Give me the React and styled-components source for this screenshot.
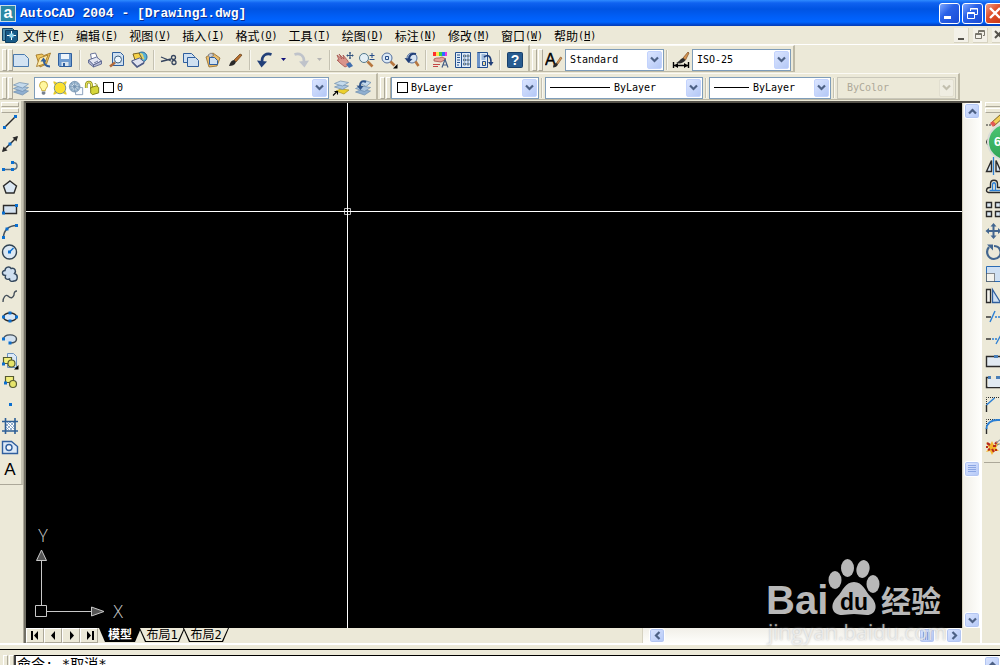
import React from 'react';
import styled, { createGlobalStyle, css } from 'styled-components';

const GlobalStyle = createGlobalStyle`
    * {
        box-sizing: border-box;
    }

    body {
        margin: 0;
        overflow: hidden;
        background-color: #ece9d8;
        font-family: "DejaVu Sans Mono", "Noto Sans CJK SC", monospace;
        font-size: 10px;
        color: #000000;
    }

    button, input, select {
        margin: 0;
        padding: 0;
        border: none;
        background: none;
        font: inherit;
        color: inherit;
    }
`;

const Window = styled.div`
    display: flex;
    flex-direction: column;
    height: 100vh;
    overflow: hidden;
`;

/* title bar */

const TitleBar = styled.header`
    display: flex;
    align-items: center;
    flex: none;
    height: 26px;
    gap: 4px;
    overflow: hidden;
    background: linear-gradient(#2f8bff 0, #0f62f0 3px, #0054e3 9px, #0060fa 18px, #0066ff 22px, #0042c8 25px, #0a3fae 26px);
`;

const Title = styled.h1`
    flex: 1;
    margin: 0;
    font-family: "Liberation Mono", monospace;
    font-size: 13px;
    font-weight: 700;
    color: #ffffff;
    text-shadow: 1px 1px #0a2f92;
`;

const WindowButtons = styled.div`
    display: flex;
    gap: 2px;
    margin-right: -6px;
`;

const WindowButton = styled.button`
    display: flex;
    width: 21px;
    height: 21px;
    border: 1px solid #ffffff;
    border-radius: 3px;
    background: ${(props) => (props.$close
        ? "linear-gradient(135deg, #f0a088, #e0512c 40%, #c53310)"
        : "linear-gradient(135deg, #7fa8ff, #2a62e8 40%, #1b4bd4)")};
`;

/* menu bar */

const MenuBar = styled.nav`
    display: flex;
    align-items: center;
    flex: none;
    height: 19px;
    padding-left: 2px;
    overflow: hidden;
    border-bottom: 1px solid #ffffff;
`;

const MenuList = styled.div`
    display: flex;
    flex: 1;
    gap: 11px;
    padding-left: 5px;
`;

const MenuItem = styled.button`
    display: flex;
    align-items: center;
    height: 18px;
    font-size: 12px;
    white-space: nowrap;
`;

const HotKey = styled.span`
    font-size: 10px;
`;

const DocButtons = styled.div`
    display: flex;
    gap: 4px;
    margin-right: -7px;
`;

const DocButton = styled.button`
    display: flex;
    width: 15px;
    height: 15px;
    background-color: #f3f1e8;
    border-right: 1px solid #d6d2c0;
    border-bottom: 1px solid #d6d2c0;
`;

/* toolbars */

const ToolRow = styled.div`
    display: flex;
    flex: none;
    height: 28px;
`;

const ToolPanel = styled.div`
    display: flex;
    align-items: center;
    height: 27px;
    padding: 2px 2px 0;
    border-top: 1px solid #fbfaf5;
    border-right: 2px solid #bdb9a6;
    border-bottom: 1px solid #bdb9a6;
`;

const gripLine = css`
    content: "";
    flex: none;
    border: 1px solid #ffffff;
    border-right-color: #aca899;
    border-bottom-color: #aca899;
`;

const Grip = styled.div`
    display: flex;
    flex: none;
    gap: 1px;
    width: 8px;
    height: 22px;
    margin-right: ${(props) => (props.$wide ? 3 : 0)}px;

    &::before, &::after {
        ${gripLine}
        width: 3px;
    }
`;

const FlatGrip = styled.div`
    display: flex;
    flex-direction: column;
    flex: none;
    gap: 1px;
    height: 9px;

    &::before, &::after {
        ${gripLine}
        height: 3px;
    }
`;

const ToolButton = styled.button`
    display: flex;
    align-items: center;
    justify-content: center;
    flex: none;
    width: ${(props) => (props.$narrow ? 14 : 22)}px;
    height: 22px;
`;

const Divider = styled.span`
    flex: none;
    width: 2px;
    height: 20px;
    margin: 0 ${(props) => (props.$tight ? 2 : 3)}px;
    border-left: 1px solid #c5c2b2;
    border-right: 1px solid #f8f7f0;
`;

const Combo = styled.label`
    display: flex;
    align-items: center;
    flex: none;
    width: ${(props) => props.$width}px;
    height: 22px;
    padding: 1px;
    border: 1px solid ${(props) => (props.$disabled ? "#c9c7ba" : "#7f9db9")};
    background-color: ${(props) => (props.$disabled ? "#ece9d8" : "#ffffff")};
    color: ${(props) => (props.$disabled ? "#aca899" : "#000000")};
`;

const ComboSelect = styled.select`
    flex: 1;
    min-width: 0;
    height: 18px;
    padding-left: ${(props) => props.$indent || 3}px;
    appearance: none;
    outline: none;
    opacity: 1;
`;

const ComboArrow = styled.span`
    display: flex;
    align-items: center;
    justify-content: center;
    flex: none;
    width: 15px;
    height: 18px;
    border-radius: 2px;
    background: ${(props) => (props.$disabled ? "#efede2" : "linear-gradient(135deg, #dbe5ff, #b4c8f6)")};
    border: 1px solid ${(props) => (props.$disabled ? "#e2dfd0" : "#c3d3fd")};
`;

const LayerGroup = styled.div`
    display: flex;
    padding: 0 1px 0 2px;
`;

const Swatch = styled.span`
    flex: none;
    width: 11px;
    height: 11px;
    margin-left: ${(props) => props.$gap || 0}px;
    border: 1px solid #000000;
    background-color: #ffffff;
`;

const LineSample = styled.span`
    flex: none;
    width: ${(props) => props.$width}px;
    height: 1px;
    margin-left: 3px;
    background-color: #000000;
`;

/* work area */

const WorkArea = styled.main`
    display: flex;
    flex: 1;
    min-height: 0;
`;

const SideBar = styled.aside`
    flex: none;
    width: 24px;
    border-right: 1px solid #aca899;
`;

const SidePanel = styled.div`
    display: flex;
    flex-direction: column;
    width: 23px;
    padding: 1px 2px 4px 1px;
    border-right: 2px solid #c5c2b2;
    border-bottom: 1px solid #aca899;
`;

const RightBar = styled.aside`
    position: relative;
    flex: none;
    width: 20px;
    padding: 1px 0 0 2px;
    border-left: 2px solid #ffffff;
    overflow: hidden;
`;

const RightPanel = styled.div`
    display: flex;
    flex-direction: column;
    width: 26px;
    padding: 0 1px 4px;
    border-bottom: 1px solid #aca899;
`;

const SideButton = styled.button`
    display: flex;
    align-items: center;
    flex: none;
    height: 22px;

    &:nth-of-type(3n) {
        height: 21px;
    }
`;

const Badge = styled.div`
    position: absolute;
    top: 22px;
    left: 5px;
    width: 38px;
    height: 38px;
    padding-left: 5px;
    border: 2px solid #d8dcd8;
    border-radius: 50%;
    background: linear-gradient(#4cc472, #2fa556);
    font-family: "Liberation Sans", sans-serif;
    font-size: 13px;
    font-weight: 700;
    line-height: 34px;
    color: #ffffff;
`;

const Document = styled.section`
    position: relative;
    display: flex;
    flex-direction: column;
    flex: 1;
    min-width: 0;
    border-top: 2px solid #55524a;
    border-left: 2px solid #716f64;
`;

const DrawingRow = styled.div`
    display: flex;
    flex: 1;
    min-height: 0;
`;

const Drawing = styled.div`
    position: relative;
    flex: 1;
    background-color: #000000;
`;

const Crosshair = styled.svg`
    display: block;
    width: 100%;
    height: 100%;
`;

const UcsIcon = styled.svg`
    position: absolute;
    left: 4px;
    bottom: 0;
`;

const ScrollBar = styled.div`
    display: flex;
    flex-direction: ${(props) => (props.$vertical ? "column" : "row")};
    width: ${(props) => (props.$vertical ? "18px" : "320px")};
    flex: none;
    padding: ${(props) => (props.$vertical ? "0 1px" : "0 0 0 6px")};
    border-left: 1px solid #d6d2c0;
    background: ${(props) => (props.$vertical
        ? "linear-gradient(90deg, #f1efe8, #fefefb)"
        : "linear-gradient(#f1efe8, #fefefb)")};
`;

const ScrollButton = styled.button`
    display: flex;
    align-items: center;
    justify-content: center;
    flex: none;
    width: 16px;
    height: ${(props) => (props.$flat ? 15 : 16)}px;
    border: 1px solid #ffffff;
    border-radius: 3px;
    background: linear-gradient(135deg, #dbe5ff, #b4c8f6);
    box-shadow: inset 0 0 0 1px #b3c6f2;
`;

const Track = styled.div`
    flex: ${(props) => props.$size};
`;

const BottomRow = styled.div`
    display: flex;
    flex: none;
    height: 15px;
    padding-right: 18px;
`;

const TabButton = styled.button`
    display: flex;
    align-items: center;
    justify-content: center;
    width: 18px;
    border: 1px solid #ffffff;
    border-right-color: #aca899;
    border-bottom-color: #aca899;
`;

const Tabs = styled.div`
    display: flex;
    flex: 1;
    padding-left: 1px;
`;

const tabShape = css`
    clip-path: polygon(0 0, 100% 0, calc(100% - 6px) 100%, 6px 100%);
`;

const Tab = styled.button`
    position: relative;
    z-index: 0;
    width: ${(props) => (props.$active ? 42 : 46)}px;
    height: 14px;
    margin-right: -2px;
    line-height: 12px;
    font-size: 12px;
    font-weight: ${(props) => (props.$active ? 700 : 400)};
    color: ${(props) => (props.$active ? "#ffffff" : "#000000")};
    background-color: #000000;
    ${tabShape}

    &::before {
        content: "";
        position: absolute;
        z-index: -1;
        inset: 0 1px 1px;
        background-color: ${(props) => (props.$active ? "#000000" : "#ece9d8")};
        ${tabShape}
    }
`;

/* watermark */

const Watermark = styled.div`
    position: absolute;
    right: 34px;
    bottom: 0;
    width: 180px;
    pointer-events: none;
`;

const WatermarkLogo = styled.svg`
    display: block;
`;

const WatermarkUrl = styled.div`
    margin-top: -4px;
    padding-left: 2px;
    font-family: "Open Sans", sans-serif;
    font-size: 21px;
    line-height: 22px;
    white-space: nowrap;
    color: rgba(255, 255, 255, 0.6);
    text-shadow: 0 0 2px rgba(140, 140, 140, 0.6);
`;

/* command line */

const CommandPane = styled.footer`
    display: flex;
    flex: none;
    height: 22px;
    flex-direction: column;
    overflow: hidden;
    border-top: 2px solid #ffffff;
`;

const Splitter = styled.div`
    flex: none;
    height: 10px;
    padding-top: 4px;

    &::before {
        content: "";
        display: block;
        height: 1px;
        background-color: #000000;
    }
`;

const CommandRow = styled.div`
    display: flex;
    flex: none;
    padding-left: 3px;
`;

const CommandBox = styled.div`
    display: flex;
    flex: 1;
    height: 40px;
    margin-left: 3px;
    border-top: 1px solid #000000;
    border-left: 2px solid #404040;
    background-color: #ffffff;
`;

const CommandInput = styled.input`
    flex: 1;
    height: 17px;
    padding-left: 1px;
    outline: none;
    font-size: 14px;
    line-height: 17px;
`;

const BLUE = "#2f5f9e";
const DOT = "#0a6fd0";
const INK = "#2b2b2b";
const PALE = "#cfe0f0";

const Dot = ({ x, y }) => <rect x={x - 1.5} y={y - 1.5} width="3" height="3" fill={DOT} />;

const sheet = (x, y, w, h) => (
    <path d={`M${x} ${y}h${w - 3}l3 3v${h - 3}h${-w}z`} fill={PALE} stroke={BLUE} />
);

const icons = {
    newFile: <path d="M1.500 3.500h11l4 4v8h-15z" fill="#d3e3f2" stroke="#4a7aae" />,
    open: (
        <g>
            <path d="M2 4l6-1 2 1.500 6.500-2.500-4 11-6.500 3z" fill="#f0c860" stroke="#9a6d1c" strokeWidth=".8" />
            <path d="M2.500 15.500l3-8.500 8.500-3-3.500 9z" fill="#ffeaa8" stroke="#9a6d1c" strokeWidth=".8" />
            <path d="M16 15.500c-4 0-6.500-2.500-6-6" fill="none" stroke={BLUE} strokeWidth="2" />
            <path d="M6.500 10.500l3-4 3 4z" fill={BLUE} />
        </g>
    ),
    save: (
        <g>
            <path d="M2.500 2.500h13v13h-12l-1-1z" fill="#6f9cd0" stroke={BLUE} />
            <path d="M5 3h8v5H5z" fill="#eef5fb" />
            <path d="M5.500 11h7v4h-7z" fill="#d8e4ef" />
            <path d="M7 12h2v3H7z" fill={BLUE} />
        </g>
    ),
    print: (
        <g stroke="#5b6791" strokeLinejoin="round" strokeWidth=".9">
            <path d="M5.500 8l-1-5 5-1 2 5z" fill="#ffffff" />
            <path d="M2.500 9l8-3 5 4-8 4z" fill="#e3e6f2" />
            <path d="M2.500 9v3l5 4v-2zM7.500 14l8-4v3l-8 3z" fill="#b6bbd4" />
            <path d="M8 12l4-2" />
        </g>
    ),
    preview: (
        <g>
            {sheet(4.5, 1.5, 11, 13)}
            <circle cx="10" cy="8.500" r="3.500" fill="#eef6fd" stroke="#40607f" />
            <path d="M7 11.500l-5 4" stroke="#b06a3c" strokeWidth="2.500" />
        </g>
    ),
    publish: (
        <g>
            <circle cx="12" cy="6" r="5" fill="#57b4d8" stroke="#2c6b9a" />
            <path d="M10 3c4 0 1 3 4 5" stroke="#e6d36a" strokeWidth="2" fill="none" />
            <path d="M3 3l6-1 3 6-7 1z" fill="#f6d34a" stroke="#7d6320" />
            <path d="M1.500 10l8-3 5 4-7 5z" fill="#dfe2ef" stroke="#4f5c86" />
            <path d="M2 11l5 5 7-4" fill="none" stroke="#4f5c86" strokeWidth="1.500" />
        </g>
    ),
    cut: (
        <g fill="none" stroke="#36455e" strokeWidth="1.300">
            <path d="M1 6l10 4M1 10.500l10-2.500" />
            <circle cx="13.500" cy="6.500" r="2" />
            <circle cx="14" cy="11.500" r="2" />
        </g>
    ),
    copy: <g>{sheet(1.5, 2.5, 11, 9)}{sheet(5.5, 6.5, 11, 9)}</g>,
    paste: (
        <g>
            <path d="M2 6l7-4 7 5-3 8-8 1z" fill="#e9bb6a" stroke="#8f6a2c" strokeWidth=".8" />
            <path d="M4 4l3-2 3 2-4 3z" fill="#c9ccd2" stroke="#777777" strokeWidth=".8" />
            <path d="M5.500 6.500h5l3 3v4h-8z" fill={PALE} stroke={BLUE} />
        </g>
    ),
    brush: (
        <g>
            <path d="M8 9l6-6 2 1-6 7z" fill="#b86f2c" stroke="#5f3a16" strokeWidth=".7" />
            <path d="M3 15c1-4 3-6 5-6l2 2c-1 3-4 4-7 4z" fill="#2a2a2a" />
        </g>
    ),
    undo: (
        <g>
            <path d="M15.500 3.500c-5-2-10 1-9.500 7" fill="none" stroke="#213f78" strokeWidth="2.600" />
            <path d="M1 9.500l10 1-5.500 6z" fill="#213f78" />
        </g>
    ),
    redo: (
        <g>
            <path d="M2.500 3.500c5-2 10 1 9.500 7" fill="none" stroke="#bfc3ca" strokeWidth="2.600" />
            <path d="M17 9.500l-10 1 5.500 6z" fill="#bfc3ca" />
        </g>
    ),
    pan: (
        <g>
            <path d="M1 4l5 4-3-5 5 5-1-4 5 6 1 4-4 2-5-4-3-3 2 0z" fill="#d9948b" stroke="#a5524c" strokeWidth=".8" />
            <path d="M10 13l4-2 3 4-4 2z" fill="#426fae" />
            <path d="M14 1v7M10.500 4.500h7M13 2h2M13 7h2M11.500 3.500v2M16.500 3.500v2" stroke="#34557f" />
        </g>
    ),
    zoomRealtime: (
        <g>
            <circle cx="6" cy="7" r="4.500" fill="#e4eff5" stroke="#53798d" />
            <path d="M9.500 10.500l5 5" stroke="#b77740" strokeWidth="2.600" />
            <path d="M14 2v5M11.500 4.500h5M11.500 8.500h5" stroke="#284e8a" />
        </g>
    ),
    zoomWindow: (
        <g>
            <circle cx="7" cy="7" r="5" fill="#dce9f5" stroke="#536f9d" />
            <path d="M5.500 5.500h3v3h-3z" fill="none" stroke="#284e8a" />
            <path d="M10.500 10.500l4 4" stroke="#b77740" strokeWidth="2.600" />
            <path d="M17.500 13v4.500H13z" fill="#000000" />
        </g>
    ),
    zoomPrevious: (
        <g>
            <circle cx="10" cy="7" r="5" fill="#d7e4f2" stroke="#536f9d" />
            <path d="M13.500 10.500l3 4.500" stroke="#b77740" strokeWidth="2.600" />
            <path d="M14 3c-4-1-7 1-7 5" fill="none" stroke="#213f78" strokeWidth="2.200" />
            <path d="M2.500 7l8 1-4 4z" fill="#213f78" />
        </g>
    ),
    properties: (
        <g>
            <path d="M1 1h3v4H1z" fill="#ff2d2d" />
            <path d="M4 1h3v4H4z" fill="#ffe14a" />
            <path d="M7 1h3v4H7z" fill="#37d24b" />
            <path d="M10 1h3v4h-3z" fill="#2d6cff" />
            <path d="M13 1h2v4h-2z" fill="#e33be0" />
            <path d="M2 8c3-2 5 0 8-2l4 2-5 3-7-1z" fill="#e6a49a" stroke="#a5524c" strokeWidth=".8" />
            <path d="M1 13.500h7M1 15.500h5" stroke="#c44747" />
            <path d="M10 16.500l3-8 3 8M11 14h4" fill="none" stroke="#445c85" strokeWidth="1.200" />
        </g>
    ),
    designCenter: (
        <g>
            <path d="M1.500 1.500h15v15h-15z" fill="#e2edf7" stroke="#234f8e" />
            <path d="M7.500 2v14" stroke="#234f8e" />
            <path d="M3 4h3M3 6.500h3M3 9h3M3 11.500h3M3 14h2" stroke="#234f8e" />
            <path d="M9.500 4h2v2h-2zM13 4h2v2h-2zM9.500 8h2v2h-2zM13 8h2v2h-2zM9.500 12h2v2h-2zM13 12h2v2h-2z" fill="#f0dda0" stroke="#234f8e" strokeWidth=".7" />
        </g>
    ),
    palettes: (
        <g>
            <path d="M1.500 1.500h10v15h-10z" fill="#e2edf7" stroke="#234f8e" />
            <path d="M1 2h3v14H1z" fill="#6a92c8" />
            <path d="M5.500 4h4M5.500 6h4M5.500 8h4" stroke="#5b86bf" />
            <path d="M6.500 10.500h3v4h-3z" fill="#f0dda0" stroke="#234f8e" />
            <path d="M8 6c4-3 7-1 7 5" fill="none" stroke="#213f78" strokeWidth="1.600" />
            <path d="M12 11h5.500L15 15z" fill="#213f78" />
        </g>
    ),
    help: (
        <g>
            <rect x="1.500" y="1.500" width="15" height="15" rx="1" fill="#285b8f" stroke="#173f6b" />
            <text x="9" y="14" textAnchor="middle" fontFamily="Liberation Sans, sans-serif" fontSize="14" fontWeight="700" fill="#ffffff">?</text>
        </g>
    ),
    textStyle: (
        <g>
            <text x="0" y="14" fontFamily="Liberation Sans, sans-serif" fontSize="16" fill="#000000" stroke="#000000" strokeWidth=".4">A</text>
            <path d="M11.500 12l4-6 1.500 1-4 6z" fill="#d79654" stroke="#7a4a20" strokeWidth=".6" />
            <path d="M8 16.500c0-3 1.500-4.500 3.500-4.500l1.500 1.500c-1 2-2.500 3-5 3z" fill="#2a2a2a" />
        </g>
    ),
    dimStyle: (
        <g>
            <path d="M11 7l5-6 1 1-3.500 7z" fill="#d79654" stroke="#7a4a20" strokeWidth=".7" />
            <path d="M4 12c3-1 5-5 7-5l2.500 2c-2 3-5 4-9.500 3z" fill="#2a2a2a" />
            <path d="M1.500 11v6M16.500 11v6M2 14.500h14" stroke="#000000" strokeWidth="1.400" />
            <path d="M2 14.500l4-2.500v5zM16 14.500l-4-2.500v5z" fill="#000000" />
        </g>
    ),
    layers: (
        <g stroke="#6c8cad" strokeWidth=".7">
            <path d="M1.500 13l6-2.500 9 1.500-6 4z" fill="#8fafd0" />
            <path d="M1.500 9.500l6-2.500 9 1.500-6 4z" fill="#a9c4de" />
            <path d="M1.500 6l6-2.500 9 1.500-6 4z" fill="#c4daec" />
        </g>
    ),
    layerCurrent: (
        <g stroke="#6c8cad" strokeWidth=".7">
            <path d="M4 12l5-2 8 1-5 4z" fill="#ecd02c" stroke="#a58f20" />
            <path d="M2.500 8l6-2.500 8 1.500-6 3.500z" fill="#a9c4de" />
            <path d="M2.500 4.500l6-2.500 8 1.500-6 3.500z" fill="#c4daec" />
            <path d="M1 16.500l4-4M2.500 12.500h3v3" fill="none" stroke="#000000" strokeWidth="1.100" />
        </g>
    ),
    layerPrevious: (
        <g stroke="#6c8cad" strokeWidth=".7">
            <path d="M1.500 13l6-2.500 9 1.500-6 4z" fill="#8fafd0" />
            <path d="M1.500 9.500l6-2.500 9 1.500-6 4z" fill="#a9c4de" />
            <path d="M6 4l5-2.500 6 2-5 4z" fill="#c4daec" />
            <path d="M12 3C8 1 6 3 6 7" fill="none" stroke="#2c5288" strokeWidth="2" />
            <path d="M2.500 6.500l7 .5-3 4z" fill="#2c5288" stroke="none" />
        </g>
    ),
    bulb: (
        <g>
            <path d="M6.500 12c0-3-2.500-3-2.500-6a4.500 4.500 0 0 1 9 0c0 3-2.500 3-2.500 6z" fill="#fff7a0" stroke="#c3a52c" />
            <path d="M6.500 13h4v2l-1 1.500h-2l-1-1.500z" fill="#76808f" />
        </g>
    ),
    sun: (
        <g>
            <path d="M2 2l3 1-2 2zM16 2l-3 1 2 2zM2 16l3-1-2-2zM16 16l-3-1 2-2z" fill="#e5c71c" stroke="#e5c71c" />
            <circle cx="9" cy="9" r="6.500" fill="#fbe12e" stroke="#6e8a86" />
        </g>
    ),
    freeze: (
        <g>
            <path d="M8.500 8.500h8v8h-8z" fill="#f8fbff" stroke="#8098b5" />
            <circle cx="7.500" cy="7.500" r="6" fill="#9bb7cf" stroke="#7f9bb6" />
            <circle cx="7.500" cy="7.500" r="3" fill="none" stroke="#e2ebf2" />
            <path d="M7.500 1.500v12M1.500 7.500h12M3.500 3.500l8 8M11.500 3.500l-8 8" stroke="#6d8dab" strokeWidth=".7" />
        </g>
    ),
    lock: (
        <g>
            <path d="M2.500 9V6c0-5 6-5 6 0v4" fill="none" stroke="#85861b" strokeWidth="3" />
            <path d="M2.500 9V6c0-5 6-5 6 0v4" fill="none" stroke="#e9e55a" strokeWidth="1.400" />
            <path d="M7.500 8.500l7-2 2 2v6l-7 2-2-2z" fill="#d6d63a" stroke="#77780e" />
            <path d="M12 4c3 0 3 2 3 4" fill="none" stroke="#85861b" />
        </g>
    ),
    line: <g><path d="M3.500 14.500l11-11" stroke={INK} strokeWidth="1.500" /><Dot x={3.5} y={14.5} /><Dot x={14.5} y={3.5} /></g>,
    ray: (
        <g>
            <path d="M2 16L16 2" stroke={INK} strokeWidth="1.500" />
            <path d="M17 1l-1.500 5.500L11.500 2.500zM1 17l1.500-5.500L6.500 15.500z" fill={INK} />
            <Dot x={9} y={9} />
        </g>
    ),
    polyline: (
        <g>
            <path d="M2.500 12.500h9M11.500 5.500c6 0 6 7 0 7" fill="none" stroke="#5f6f7f" strokeWidth="1.500" />
            <Dot x={2.5} y={12.5} /><Dot x={11.5} y={12.5} /><Dot x={11.5} y={5.5} />
        </g>
    ),
    polygon: <path d="M9 3l6.500 5-2.500 7H5L2.500 8z" fill="#dbe8f4" stroke={INK} strokeWidth="1.400" />,
    rectangle: <g><path d="M2.500 5.500h13v8h-13z" fill="#d3e1ef" stroke={INK} strokeWidth="1.400" /><Dot x={2.5} y={13} /><Dot x={15.5} y={5.5} /></g>,
    arc: <g><path d="M2.500 15.500c0-7 5-12 13-12" fill="none" stroke="#45505a" strokeWidth="1.500" /><Dot x={2.5} y={15.5} /><Dot x={6} y={7} /><Dot x={15.5} y={3.5} /></g>,
    circle: <g><circle cx="8.500" cy="9" r="7" fill="#dbe8f4" stroke="#2f4253" strokeWidth="1.400" /><path d="M8.500 9l4-4" stroke={DOT} strokeWidth="1.500" /><Dot x={8.5} y={9} /></g>,
    cloud: (
        <path d="M4.500 10.500c-4 0-4-5-.5-5 0-4 5-4.500 6-2 4-1 5.500 2.500 3.500 5 4 1 3.500 7.500-.5 7.500-2.500 1-4.500 0-4.500-2-3 1-5-.5-4-3.500z" fill="#cfdff0" stroke="#33475c" strokeWidth="1.400" />
    ),
    spline: <path d="M2 15c0-5 3-8 5-6 3 3 5 2 6-1 0-3 1-4 3-4" fill="none" stroke="#45505a" strokeWidth="1.400" />,
    ellipse: <g><ellipse cx="9" cy="9" rx="6.500" ry="4" fill="#dbe8f4" stroke={INK} strokeWidth="1.400" /><Dot x={2.5} y={9} /><Dot x={9} y={5} /><Dot x={15.5} y={9} /><Dot x={9} y={13} /></g>,
    ellipseArc: <g><path d="M2.500 9c1-6 13-5 13 0 0 3-3 4-6.500 4" fill="#d3e1ef" stroke="#45505a" strokeWidth="1.400" /><Dot x={2.5} y={9} /><Dot x={9} y={13} /></g>,
    insertBlock: (
        <g>
            <path d="M6.500 1.500h6l3 3v11h-9z" fill="#dce9f7" stroke="#6b92bf" />
            <path d="M2.500 5.500h8v6h-8z" fill="#f3ef7c" stroke="#555a30" strokeWidth="1.200" />
            <circle cx="10.500" cy="11.500" r="3.500" fill="#e6e46a" stroke="#555a30" strokeWidth="1.200" />
            <Dot x={2.5} y={12} />
            <path d="M17.500 13v4.500H13z" fill="#000000" />
        </g>
    ),
    makeBlock: (
        <g>
            <path d="M4.500 3.500h8v6h-8z" fill="#f3ef7c" stroke="#555a30" strokeWidth="1.200" />
            <circle cx="12" cy="11" r="3.500" fill="#e6e46a" stroke="#555a30" strokeWidth="1.200" />
            <Dot x={4.5} y={10} />
        </g>
    ),
    point: <Dot x={9.5} y={9.5} />,
    hatch: (
        <g>
            <path d="M5 5h8v8H5z" fill="#ffffff" />
            <path d="M5 7l6 6M5 10l3 3M6 5l7 7M9 5l4 4M5 9l4-4M5 13l8-8M9 13l4-4" stroke="#7a9cc0" strokeWidth=".8" />
            <path d="M4.500 1v16M14 1v16M1 4.500h16M1 14h16" stroke="#2d5f97" strokeWidth="1.600" />
        </g>
    ),
    region: (
        <g>
            <path d="M1.500 3.500h9l6 5v7h-15z" fill="#dce9f7" stroke={BLUE} strokeWidth="1.400" />
            <circle cx="8" cy="9.500" r="3" fill="#f4f8fc" stroke={BLUE} strokeWidth="1.400" />
        </g>
    ),
    mtext: <text x="9" y="15" textAnchor="middle" fontFamily="Liberation Sans, sans-serif" fontSize="17" fill="#000000">A</text>,
    erase: (
        <g>
            <path d="M1 12h6" stroke={INK} strokeDasharray="2 1" />
            <path d="M6 10L16 1l3 3-10 9z" fill="#f2cf58" stroke="#7a5f1a" />
            <path d="M5 10l3-2 3 3-3 3z" fill="#e25a56" />
        </g>
    ),
    copyObject: <g><circle cx="5" cy="7" r="3.500" fill="none" stroke={INK} /><circle cx="11" cy="7" r="4" fill="none" stroke={BLUE} /></g>,
    mirror: (
        <g>
            <path d="M1.500 14.500l5-11v11z" fill="#dbe8f4" stroke={INK} strokeWidth="1.400" />
            <path d="M8.500 0v18" stroke="#2b7fd4" strokeWidth="1.300" />
            <path d="M16 14.500l-5-11v11z" fill="#dbe8f4" stroke={INK} strokeWidth="1.400" />
        </g>
    ),
    offset: (
        <g fill="none" strokeLinejoin="round">
            <path d="M18 14.500H3.500c-3 0-2.500-5 1-5h1V6c0-5 7-5 7 0v3.500H18" stroke={INK} strokeWidth="1.400" />
            <path d="M18 12.500H4.500M7.500 12V7c0-3 3-3 3 0v5" stroke="#2b7fd4" strokeWidth="1.300" />
        </g>
    ),
    array: <path d="M1.500 2.500h5v5h-5zM10.500 2.500h5v5h-5zM1.500 11.500h5v5h-5zM10.500 11.500h5v5h-5z" fill="#dbe8f4" stroke={INK} strokeWidth="1.400" />,
    move: (
        <g>
            <path d="M8.500 3v12M2 9h13" stroke="#42668f" strokeWidth="2" />
            <path d="M8.500 1l3 3.500h-6zM8.500 17l3-3.500h-6zM.5 9L4 6v6zM16.500 9L13 6v6z" fill="#42668f" />
        </g>
    ),
    rotate: <g><path d="M4 4c-4 5-1 12 5 12 5 0 8-5 6-9-1-3-4-4-6-4" fill="none" stroke="#42668f" strokeWidth="2.200" /><path d="M2 1.500h6v6z" fill="#42668f" /></g>,
    scale: <g><path d="M1.500 1.500h16v15h-16z" fill="#cfe0f2" stroke="#2b6cb5" /><path d="M1.500 8.500h8v8h-8z" fill="#f3f3ee" stroke={INK} strokeDasharray="1 1" /></g>,
    stretch: <g><path d="M1.500 2.500h4v13h-4z" fill="#f4f4ee" stroke={INK} strokeWidth="1.300" /><path d="M7.500 2.500l8 13h-8z" fill="#cfe0f2" stroke={BLUE} strokeWidth="1.300" /></g>,
    trim: <g><path d="M1 9h5" stroke={INK} strokeWidth="1.400" /><path d="M5 14l5-11" stroke="#2b7fd4" strokeWidth="1.400" /><path d="M10 9h8" stroke="#2b7fd4" strokeWidth="1.400" strokeDasharray="2 1" /></g>,
    extend: <g><path d="M1 9h5" stroke={INK} strokeWidth="1.400" /><path d="M7 9h5" stroke="#2b7fd4" strokeDasharray="2 1" strokeWidth="1.400" /><path d="M11 14l6-11" stroke="#2b7fd4" strokeWidth="1.300" /></g>,
    breakAt: <g><path d="M18 4.500H1.500v10H18" fill="#e2eaf2" stroke={INK} strokeWidth="1.400" /><path d="M9 3h4v3H9z" fill="#4a7fb8" /></g>,
    breakGap: <g><path d="M3 4.500H1.500v10H18M14 4.500h4" fill="none" stroke={INK} strokeWidth="1.400" /><path d="M3 6h12v8H3z" fill="#e2eaf2" /><path d="M3 3h3v3H3zM11 3h4v3h-4z" fill="#4a7fb8" /></g>,
    chamfer: <g><path d="M1.500 9V2.500H18" fill="none" stroke={INK} strokeDasharray="1 1" /><path d="M1.500 17v-7" stroke={INK} strokeWidth="1.400" /><path d="M1.500 10l8-7" stroke="#2b7fd4" strokeWidth="1.500" /></g>,
    fillet: <g><path d="M1.500 9V2.500H18" fill="none" stroke={INK} strokeDasharray="1 1" /><path d="M1.500 17v-6" stroke={INK} strokeWidth="1.400" /><path d="M1.500 12c0-6 5-9 11-9h6" fill="none" stroke="#2b7fd4" strokeWidth="1.800" /></g>,
    explode: (
        <g>
            <path d="M1 4l4 3 2-4 2 4 5-2-3 5 3 3-5 0-2 4-2-4-4 1 3-4z" fill="#f4b52c" />
            <path d="M2 5l3 2M10 6l2-2M8 8l3 0M3 12l2-1M7 11l2 3M1 9h2M10 12h2" stroke="#b72a1c" strokeWidth="2.200" />
            <path d="M11 5l5-4M12 7l5-2" stroke="#7d8a94" />
        </g>
    ),
};

const Icon = ({ name, size = 18 }) => (
    <svg width={size} height={size} viewBox="0 0 18 18" aria-hidden="true">{icons[name]}</svg>
);

const Chevron = ({ turn = 0, color = "#4d6185" }) => (
    <svg width="9" height="9" viewBox="0 0 9 9" aria-hidden="true">
        <path d="M1 2.500l3.500 3.500L8 2.500" fill="none" stroke={color} strokeWidth="2.200" transform={`rotate(${turn} 4.500 4.500)`} />
    </svg>
);

const Caret = ({ color }) => (
    <svg width="5" height="3" viewBox="0 0 5 3" aria-hidden="true"><path d="M0 0h5L2.500 3z" fill={color} /></svg>
);

const menus = [
    ["文件", "F"], ["编辑", "E"], ["视图", "V"], ["插入", "I"], ["格式", "O"], ["工具", "T"],
    ["绘图", "D"], ["标注", "N"], ["修改", "M"], ["窗口", "W"], ["帮助", "H"],
];

const standardTools = [
    ["newFile", "open", "save"],
    ["print", "preview", "publish"],
    ["cut", "copy", "paste", "brush"],
    ["undo", "undoList", "redo", "redoList"],
    ["pan", "zoomRealtime", "zoomWindow", "zoomPrevious"],
    ["properties", "designCenter", "palettes"],
    ["help"],
];

const drawTools = [
    "line", "ray", "polyline", "polygon", "rectangle", "arc", "circle", "cloud", "spline",
    "ellipse", "ellipseArc", "insertBlock", "makeBlock", "point", "hatch", "region", "mtext",
];

const modifyTools = [
    "erase", "copyObject", "mirror", "offset", "array", "move", "rotate", "scale", "stretch",
    "trim", "extend", "breakAt", "breakGap", "chamfer", "fillet", "explode",
];

const Tool = ({ name }) => {
    if (name === "undoList" || name === "redoList") {
        return (
            <ToolButton $narrow aria-label={name}>
                <Caret color={name === "undoList" ? "#10107a" : "#b5b5b5"} />
            </ToolButton>
        );
    }
    return <ToolButton aria-label={name}><Icon name={name} /></ToolButton>;
};

const ComboBox = ({ label, value, width, indent, disabled, children }) => (
    <Combo $width={width} $disabled={disabled}>
        {children}
        <ComboSelect aria-label={label} defaultValue={value} $indent={indent} disabled={disabled}>
            <option value={value}>{value}</option>
        </ComboSelect>
        <ComboArrow $disabled={disabled}><Chevron color={disabled ? "#c2bfae" : undefined} /></ComboArrow>
    </Combo>
);

const TabArrow = ({ label, path }) => (
    <TabButton aria-label={label}>
        <svg width="9" height="9" viewBox="0 0 9 9" aria-hidden="true"><path d={path} fill="#000000" /></svg>
    </TabButton>
);

const Baidu = () => (
    <Watermark>
        <WatermarkLogo width="180" height="66" viewBox="0 0 180 66" fill="#b8b8b8">
            <text x="0" y="55" fontFamily="Liberation Sans, sans-serif" fontSize="40" fontWeight="700">Bai</text>
            <ellipse cx="69" cy="21" rx="6.500" ry="9" />
            <ellipse cx="81.500" cy="9" rx="6.500" ry="9" />
            <ellipse cx="97" cy="10" rx="6.500" ry="9" transform="rotate(12 97 10)" />
            <ellipse cx="107" cy="25" rx="6.500" ry="9" />
            <path d="M88 23c9 0 11 9 17 15 8 8 5 18-4 18-5 0-8-1-13-1s-8 1-12 1c-10 0-13-10-5-18 6-6 8-15 17-15z" />
            <text x="88" y="51" textAnchor="middle" fontFamily="Liberation Sans, sans-serif" fontSize="23" fontWeight="700" fill="#000000">du</text>
            <text x="115" y="53" fontFamily="Noto Sans CJK SC, sans-serif" fontSize="30" fontWeight="700">经验</text>
        </WatermarkLogo>
        <WatermarkUrl>jingyan.baidu.com</WatermarkUrl>
    </Watermark>
);

const App = () => {

    return (
        <Window>
            <GlobalStyle />
            <TitleBar>
                <svg width="16" height="17" viewBox="0 0 16 17" aria-hidden="true">
                    <rect x="0.500" y="0.500" width="15" height="16" fill="#2b88a4" stroke="#c9dde6" />
                    <text x="8" y="13" textAnchor="middle" fontFamily="Liberation Sans, sans-serif" fontSize="16" fontWeight="700" fill="#ffffff">a</text>
                </svg>
                <Title>AutoCAD 2004 - [Drawing1.dwg]</Title>
                <WindowButtons>
                    <WindowButton aria-label="Minimize">
                        <svg width="19" height="19"><path d="M4 12h7v3H4z" fill="#ffffff" /></svg>
                    </WindowButton>
                    <WindowButton aria-label="Restore">
                        <svg width="19" height="19" fill="none" stroke="#ffffff">
                            <path d="M7.500 7V4.500h7v6H12M7 5h8" />
                            <path d="M4.500 8.500h7v6h-7zM4 9.500h8" />
                        </svg>
                    </WindowButton>
                    <WindowButton $close aria-label="Close">
                        <svg width="19" height="19"><path d="M4 4l10 10M14 4L4 14" stroke="#ffffff" strokeWidth="2.400" /></svg>
                    </WindowButton>
                </WindowButtons>
            </TitleBar>

            <MenuBar>
                <svg width="16" height="16" viewBox="0 0 16 16" aria-hidden="true">
                    <path d="M.5 1.500h10l2 2v10H.5z" fill="#4c8dad" stroke="#174466" />
                    <path d="M3.500 3.500h12v10l-2 2h-10z" fill="#185a86" stroke="#0e3c5f" />
                    <path d="M9.500 4v9M5 8.500h9" stroke="#ffffff" />
                    <path d="M7.500 6.500h4v4h-4z" fill="#8fd5ee" />
                </svg>
                <MenuList>
                    {menus.map(([text, key]) => (
                        <MenuItem key={key}>{text}<HotKey>(<u>{key}</u>)</HotKey></MenuItem>
                    ))}
                </MenuList>
                <DocButtons>
                    <DocButton aria-label="Minimize drawing">
                        <svg width="14" height="14"><path d="M4 10h6v2H4z" fill="#55534c" /></svg>
                    </DocButton>
                    <DocButton aria-label="Restore drawing">
                        <svg width="14" height="14" fill="none" stroke="#77756b"><path d="M5.500 5V2.500h6v5H10M5 3.500h7M2.500 5.500h6v5h-6zM2 6.500h7" /></svg>
                    </DocButton>
                    <DocButton aria-label="Close drawing">
                        <svg width="14" height="14"><path d="M3 3l7 7M10 3l-7 7" stroke="#55534c" strokeWidth="2" /></svg>
                    </DocButton>
                </DocButtons>
            </MenuBar>

            <ToolRow>
                <ToolPanel>
                    <Grip />
                    {standardTools.map((group, index) => (
                        <React.Fragment key={group[0]}>
                            {index > 0 && <Divider />}
                            {group.map((name) => <Tool key={name} name={name} />)}
                        </React.Fragment>
                    ))}
                </ToolPanel>
                <ToolPanel>
                    <Grip $wide />
                    <ToolButton aria-label="Text style"><Icon name="textStyle" /></ToolButton>
                    <ComboBox label="Text style" value="Standard" width={99} />
                    <Divider $tight />
                    <ToolButton aria-label="Dimension style"><Icon name="dimStyle" /></ToolButton>
                    <ComboBox label="Dimension style" value="ISO-25" width={99} />
                </ToolPanel>
            </ToolRow>

            <ToolRow>
                <ToolPanel>
                    <Grip />
                    <ToolButton aria-label="Layers"><Icon name="layers" /></ToolButton>
                    <LayerGroup>
                        <ComboBox label="Layer" value="0" width={295}>
                            <Icon name="bulb" size={16} />
                            <Icon name="sun" size={16} />
                            <Icon name="freeze" size={16} />
                            <Icon name="lock" size={16} />
                            <Swatch $gap={3} />
                        </ComboBox>
                    </LayerGroup>
                    <ToolButton aria-label="Make layer current"><Icon name="layerCurrent" /></ToolButton>
                    <ToolButton aria-label="Previous layer"><Icon name="layerPrevious" /></ToolButton>
                </ToolPanel>
                <ToolPanel>
                    <Grip $wide />
                    <ComboBox label="Color" value="ByLayer" width={148}>
                        <Swatch $gap={4} />
                    </ComboBox>
                    <Divider $tight />
                    <ComboBox label="Linetype" value="ByLayer" width={158} indent={4}>
                        <LineSample $width={60} />
                    </ComboBox>
                    <Divider $tight />
                    <ComboBox label="Lineweight" value="ByLayer" width={122} indent={4}>
                        <LineSample $width={35} />
                    </ComboBox>
                    <Divider $tight />
                    <ComboBox label="Plot style" value="ByColor" width={119} indent={8} disabled />
                </ToolPanel>
            </ToolRow>

            <WorkArea>
                <SideBar>
                    <SidePanel>
                        <FlatGrip />
                        {drawTools.map((name) => (
                            <SideButton key={name} aria-label={name}><Icon name={name} /></SideButton>
                        ))}
                    </SidePanel>
                </SideBar>

                <Document>
                    <DrawingRow>
                        <Drawing>
                            <Crosshair stroke="#ffffff" fill="none">
                                <path d="M318.500 105.500h6v6h-6z" stroke="#b8b8b8" />
                                <line x1="321.500" y1="0" x2="321.500" y2="100%" />
                                <line x1="0" y1="108.500" x2="100%" y2="108.500" />
                            </Crosshair>
                            <UcsIcon width="100" height="102" fill="none" stroke="#c8c8c8">
                                <path d="M5.500 79.500h11v11h-11zM11.500 79V25M17 85.500h56" />
                                <path d="M11.500 24l-5 10.500h10zM74 85.500L61.500 81v9z" fill="#555555" />
                                <g stroke="none" fill="#c8c8c8" fontFamily="Open Sans, sans-serif" fontWeight="300" fontSize="18" textAnchor="middle">
                                    <text x="13" y="16">Y</text>
                                    <text x="88" y="92">X</text>
                                </g>
                            </UcsIcon>
                        </Drawing>
                        <ScrollBar $vertical>
                            <ScrollButton aria-label="Scroll up"><Chevron turn={180} /></ScrollButton>
                            <Track $size={341} />
                            <ScrollButton aria-label="Vertical position">
                                <svg width="8" height="8"><path d="M0 .5h8M0 2.500h8M0 4.500h8M0 6.500h8" stroke="#8ba6e3" /></svg>
                            </ScrollButton>
                            <Track $size={135} />
                            <ScrollButton aria-label="Scroll down"><Chevron /></ScrollButton>
                        </ScrollBar>
                    </DrawingRow>
                    <BottomRow>
                        <TabArrow label="First tab" path="M0 0h2v9H0zM7 0v9L3 4.500z" />
                        <TabArrow label="Previous tab" path="M6 0v9L2 4.500z" />
                        <TabArrow label="Next tab" path="M3 0v9l4-4.500z" />
                        <TabArrow label="Last tab" path="M7 0h2v9H7zM2 0v9l4-4.500z" />
                        <Tabs>
                            <Tab $active>模型</Tab>
                            <Tab>布局1</Tab>
                            <Tab>布局2</Tab>
                        </Tabs>
                        <ScrollBar>
                            <ScrollButton $flat aria-label="Scroll left"><Chevron turn={90} /></ScrollButton>
                            <Track $size={255} />
                            <ScrollButton $flat aria-label="Horizontal position">
                                <svg width="8" height="8"><path d="M.5 0v8M2.500 0v8M4.500 0v8M6.500 0v8" stroke="#8ba6e3" /></svg>
                            </ScrollButton>
                            <Track $size={11} />
                            <ScrollButton $flat aria-label="Scroll right"><Chevron turn={270} /></ScrollButton>
                        </ScrollBar>
                    </BottomRow>
                    <Baidu />
                </Document>

                <RightBar>
                    <RightPanel>
                        <FlatGrip />
                        {modifyTools.map((name) => (
                            <SideButton key={name} aria-label={name}><Icon name={name} /></SideButton>
                        ))}
                    </RightPanel>
                    <Badge>6</Badge>
                </RightBar>
            </WorkArea>

            <CommandPane>
                <Splitter />
                <CommandRow>
                    <Grip />
                    <CommandBox>
                        <CommandInput aria-label="Command line" defaultValue="命令: *取消*" />
                        <ScrollButton aria-label="Scroll history up"><Chevron turn={180} /></ScrollButton>
                    </CommandBox>
                </CommandRow>
            </CommandPane>
        </Window>
    );
};

export default App;
